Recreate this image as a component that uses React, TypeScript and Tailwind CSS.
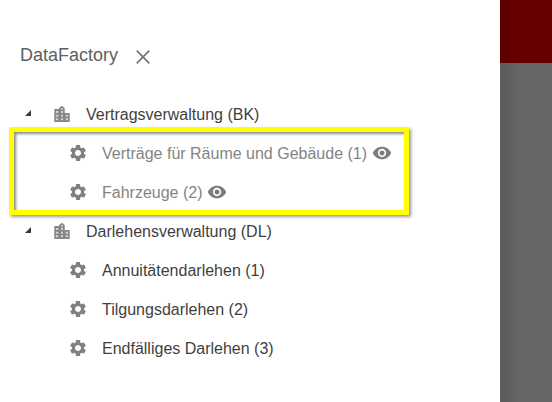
import { MdSettings, MdVisibility } from "react-icons/md";

type Item = { label: string; visible?: boolean };
type Group = { label: string; items: Item[] };

const groups: Group[] = [
  {
    label: "Vertragsverwaltung (BK)",
    items: [
      { label: "Verträge für Räume und Gebäude (1)", visible: true },
      { label: "Fahrzeuge (2)", visible: true },
    ],
  },
  {
    label: "Darlehensverwaltung (DL)",
    items: [
      { label: "Annuitätendarlehen (1)" },
      { label: "Tilgungsdarlehen (2)" },
      { label: "Endfälliges Darlehen (3)" },
    ],
  },
];

function CityIcon() {
  return (
    <svg className="mb-px ml-[23px] size-4 shrink-0" viewBox="0 0 16 16">
      <path d="M.3 3H5V2l3-2.2L10.7 2v5h5v9H.3z" fill="#868686" />
      <path
        d="M2 5h2.3v2H2zM2 8.7h2.3v2H2zM2 12.3h2.3v2H2zM7 2.2h2v1.5H7zM7 5h2v2H7zM7 8.7h2v2H7zM7 12.3h2v2H7zM11.7 8.7H14v2h-2.3zM11.7 12.3H14v2h-2.3z"
        fill="#d2d2d2"
      />
    </svg>
  );
}

function ItemRow({ item }: { item: Item }) {
  return (
    <li className="flex h-[39px] items-center pl-[68px]">
      <MdSettings className="mb-px size-5 shrink-0 text-[#808080]" />
      <span className={`ml-3.5 whitespace-nowrap ${item.visible ? "text-[#848484]" : "text-[#3f3f3f]"}`}>
        {item.label}
      </span>
      {item.visible && <MdVisibility className="mb-px ml-[4.5px] size-5 shrink-0 text-[#7c7c7c]" />}
    </li>
  );
}

function GroupRow({ group }: { group: Group }) {
  return (
    <li>
      <div className="flex h-[39px] items-center pl-[25px] text-[#3f3f3f]">
        <svg className="mb-[3px] size-1.5 shrink-0" viewBox="0 0 6 6">
          <path d="M6 0v6H0z" fill="#443538" />
        </svg>
        <CityIcon />
        <span className="ml-4 whitespace-nowrap">{group.label}</span>
      </div>
      <ul>
        {group.items.map((item) => (
          <ItemRow key={item.label} item={item} />
        ))}
      </ul>
    </li>
  );
}

export default function App() {
  return (
    <div className="flex h-[402px] w-[552px] overflow-hidden bg-white font-['Liberation_Sans',Arial,sans-serif] text-base">
      <aside className="relative w-[500px] shrink-0 bg-white">
        <header className="flex h-[95px] items-center pl-5 pt-[17px]">
          <h1 className="mb-0.5 text-lg leading-6 text-[#606060]">DataFactory</h1>
          <svg className="ml-[18px] mt-0.5 size-3.5" viewBox="0 0 14 14" fill="none" stroke="#757575" strokeWidth="1.7">
            <path d="M.7.7l12.6 12.6M13.3.7L.7 13.3" />
          </svg>
        </header>
        <ul>
          {groups.map((group) => (
            <GroupRow key={group.label} group={group} />
          ))}
        </ul>
        <div className="pointer-events-none absolute left-[9px] top-[127px] h-[88px] w-[400px] border-5 border-[#ffff00] shadow-[2px_2px_3px_#999,inset_2px_2px_3px_#8c8c8c]" />
      </aside>
      <div className="flex grow flex-col">
        <div className="h-[63px] bg-linear-to-r from-[#5c0000] to-[#660000] to-40%" />
        <div className="grow bg-linear-to-r from-[#5a5a5a] to-[#666666] to-40%" />
      </div>
    </div>
  );
}
